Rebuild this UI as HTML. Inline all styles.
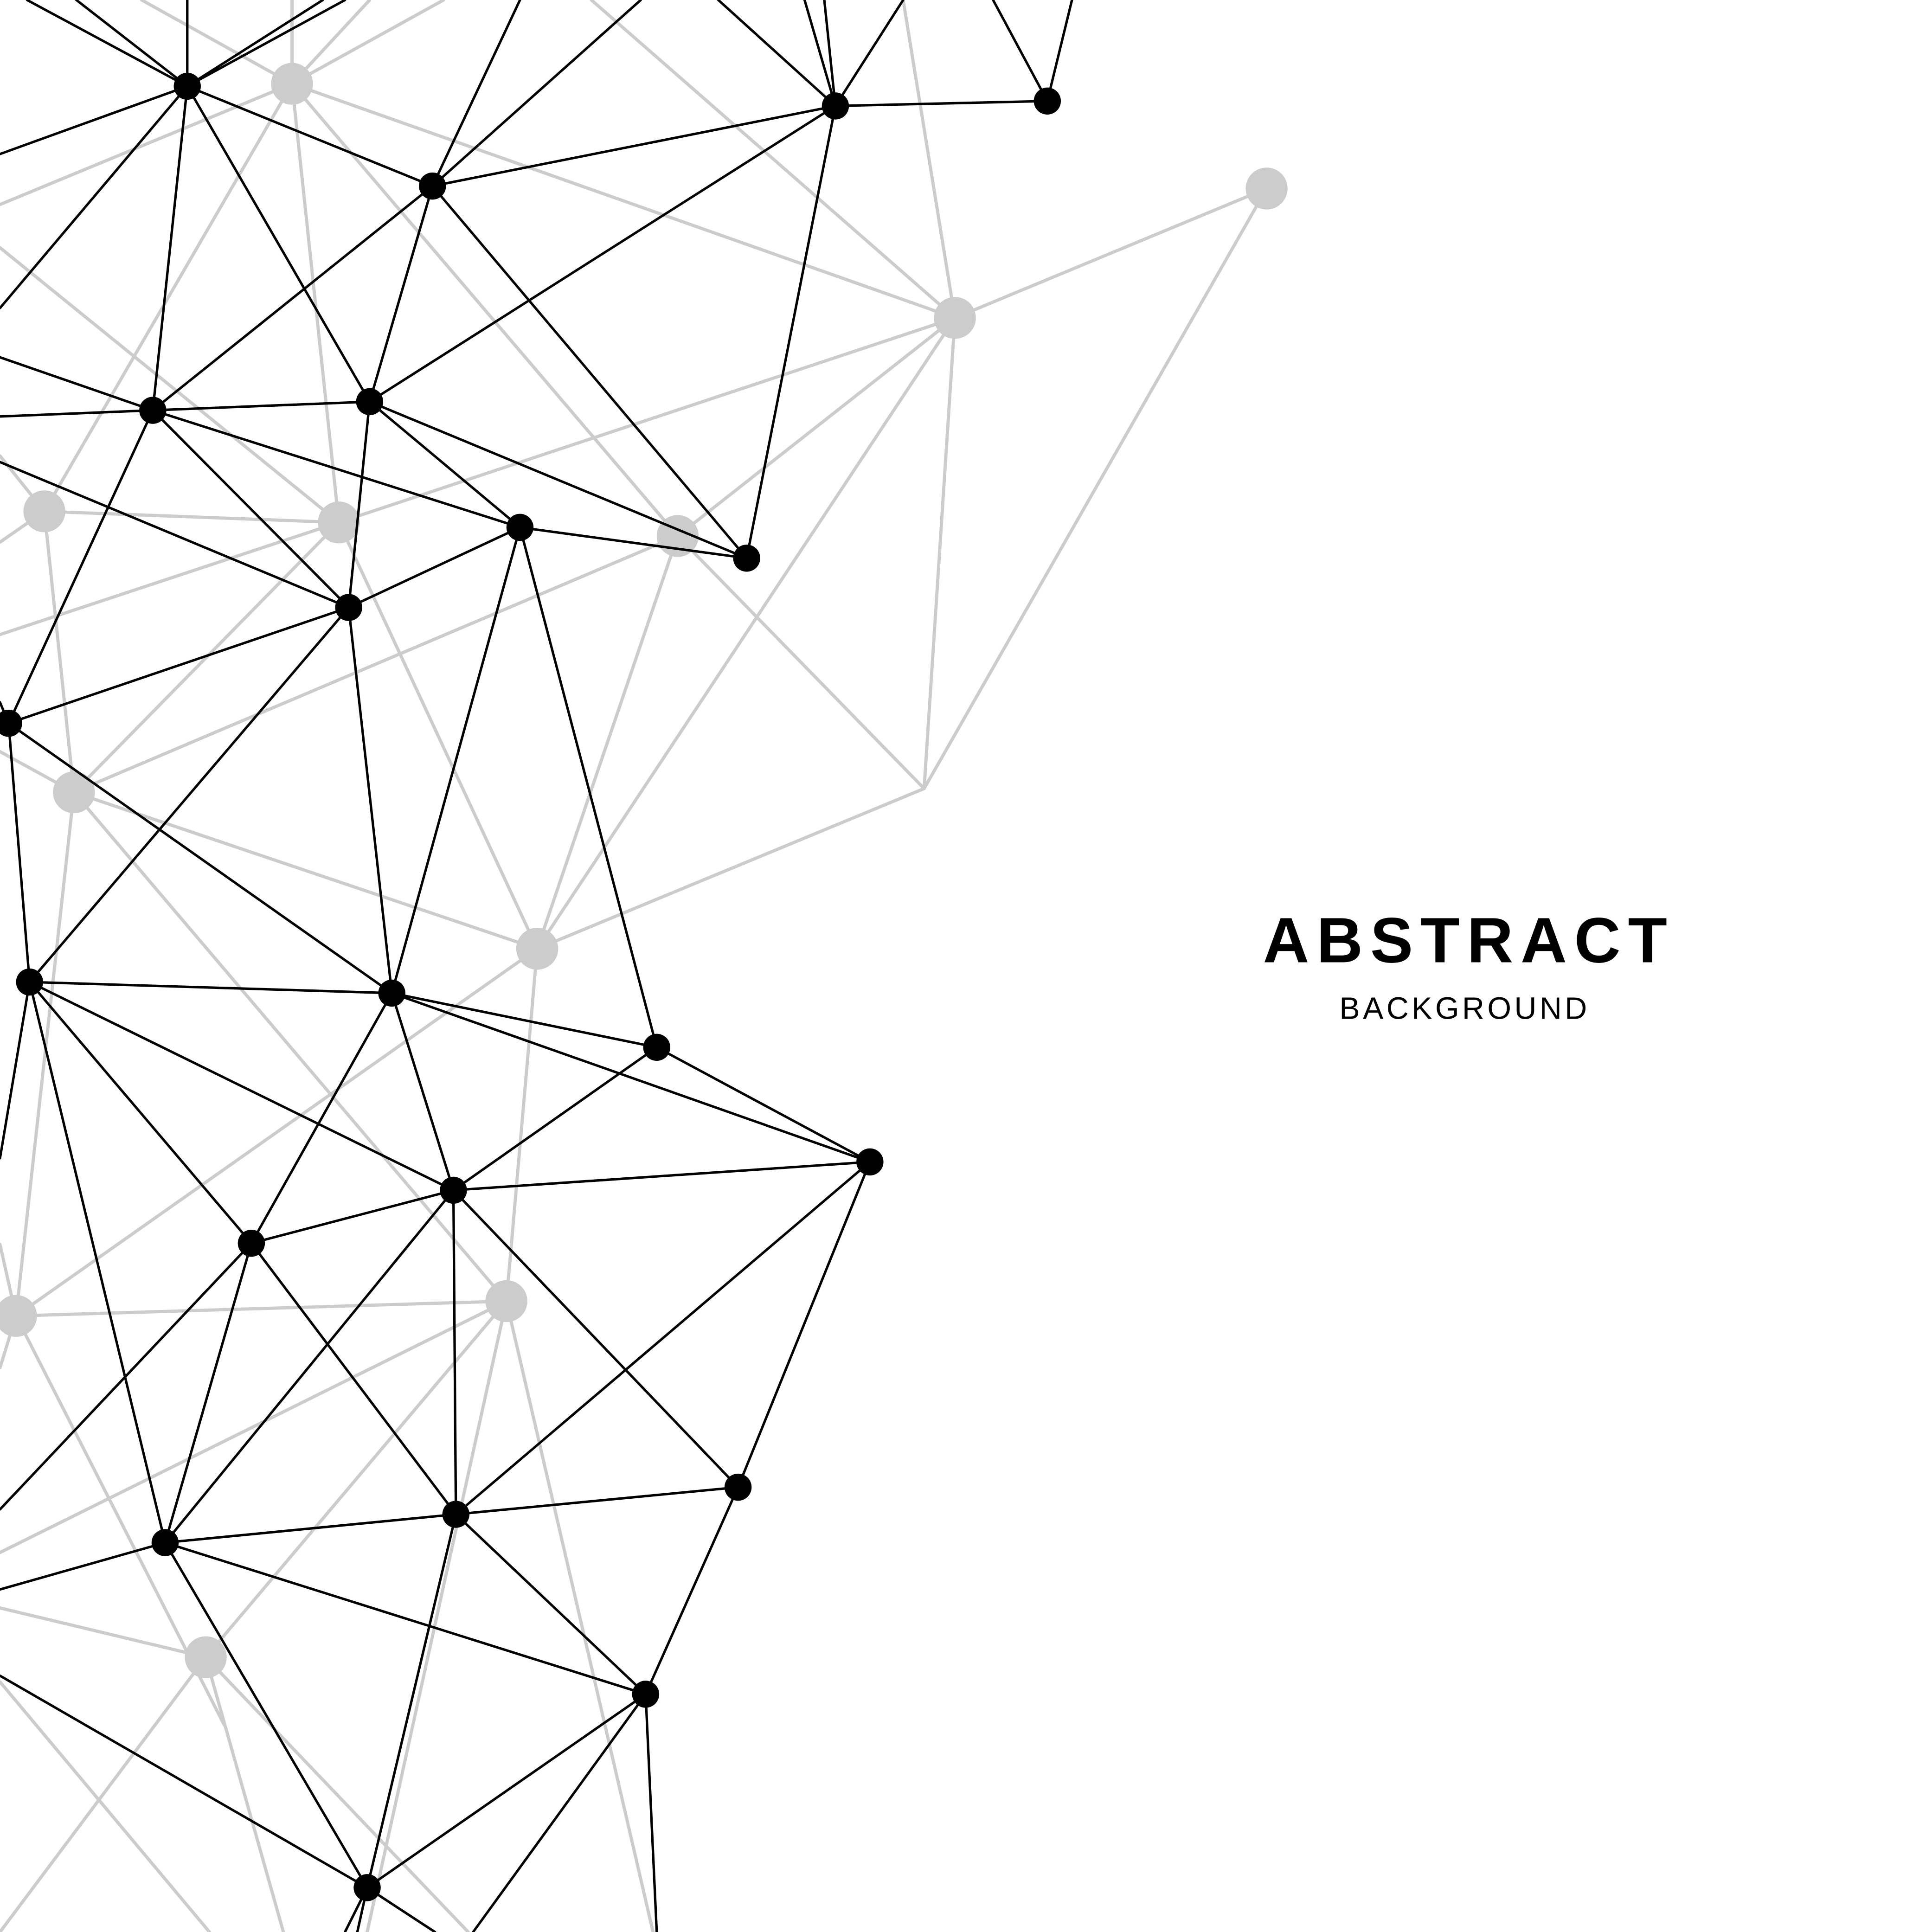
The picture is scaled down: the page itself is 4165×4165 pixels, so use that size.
<!DOCTYPE html>
<html><head><meta charset="utf-8"><style>
html,body{margin:0;padding:0;background:#fff;}
svg{display:block;}
</style></head><body>
<svg width="4165" height="4165" viewBox="0 0 1568 1568" xmlns="http://www.w3.org/2000/svg">
<rect width="1568" height="1568" fill="#fff"/>
<g stroke="#cccccc" stroke-width="2.6" fill="none" stroke-linecap="round">
<line x1="237" y1="68" x2="237" y2="0"/>
<line x1="237" y1="68" x2="115" y2="0"/>
<line x1="237" y1="68" x2="360" y2="0"/>
<line x1="237" y1="68" x2="300" y2="0"/>
<line x1="237" y1="68" x2="0" y2="166"/>
<line x1="237" y1="68" x2="775" y2="258"/>
<line x1="237" y1="68" x2="275" y2="424"/>
<line x1="237" y1="68" x2="36" y2="415"/>
<line x1="237" y1="68" x2="550" y2="435"/>
<line x1="480" y1="0" x2="775" y2="258"/>
<line x1="733" y1="0" x2="775" y2="258"/>
<line x1="1028" y1="153" x2="775" y2="258"/>
<line x1="1028" y1="153" x2="750" y2="640"/>
<line x1="775" y1="258" x2="750" y2="640"/>
<line x1="775" y1="258" x2="436" y2="770"/>
<line x1="775" y1="258" x2="275" y2="424"/>
<line x1="775" y1="258" x2="550" y2="435"/>
<line x1="550" y1="435" x2="750" y2="640"/>
<line x1="550" y1="435" x2="436" y2="770"/>
<line x1="550" y1="435" x2="60" y2="643"/>
<line x1="750" y1="640" x2="436" y2="770"/>
<line x1="0" y1="201" x2="275" y2="424"/>
<line x1="36" y1="415" x2="275" y2="424"/>
<line x1="36" y1="415" x2="0" y2="440"/>
<line x1="36" y1="415" x2="60" y2="643"/>
<line x1="0" y1="370" x2="36" y2="415"/>
<line x1="275" y1="424" x2="0" y2="515"/>
<line x1="275" y1="424" x2="60" y2="643"/>
<line x1="275" y1="424" x2="436" y2="770"/>
<line x1="60" y1="643" x2="436" y2="770"/>
<line x1="60" y1="643" x2="0" y2="610"/>
<line x1="60" y1="643" x2="411" y2="1056"/>
<line x1="60" y1="643" x2="13" y2="1068"/>
<line x1="436" y1="770" x2="411" y2="1056"/>
<line x1="436" y1="770" x2="13" y2="1068"/>
<line x1="13" y1="1068" x2="411" y2="1056"/>
<line x1="13" y1="1068" x2="0" y2="1010"/>
<line x1="13" y1="1068" x2="0" y2="1110"/>
<line x1="13" y1="1068" x2="182" y2="1400"/>
<line x1="411" y1="1056" x2="0" y2="1260"/>
<line x1="411" y1="1056" x2="167" y2="1345"/>
<line x1="411" y1="1056" x2="530" y2="1568"/>
<line x1="411" y1="1056" x2="298" y2="1568"/>
<line x1="167" y1="1345" x2="0" y2="1305"/>
<line x1="167" y1="1345" x2="0" y2="1568"/>
<line x1="167" y1="1345" x2="230" y2="1568"/>
<line x1="167" y1="1345" x2="380" y2="1568"/>
<line x1="0" y1="1365" x2="170" y2="1568"/>
</g>
<g fill="#cccccc">
<circle cx="237" cy="68" r="17"/><circle cx="775" cy="258" r="17"/><circle cx="1028" cy="153" r="17"/>
<circle cx="36" cy="415" r="17"/><circle cx="275" cy="424" r="17"/><circle cx="550" cy="435" r="17"/>
<circle cx="60" cy="643" r="17"/><circle cx="436" cy="770" r="17"/><circle cx="13" cy="1068" r="17"/>
<circle cx="411" cy="1056" r="17"/><circle cx="167" cy="1345" r="17"/>
</g>
<g stroke="#000" stroke-width="2" fill="none" stroke-linecap="round">
<line x1="152" y1="70" x2="152" y2="0"/>
<line x1="152" y1="70" x2="22" y2="0"/>
<line x1="152" y1="70" x2="62" y2="0"/>
<line x1="152" y1="70" x2="262" y2="0"/>
<line x1="152" y1="70" x2="280" y2="0"/>
<line x1="152" y1="70" x2="0" y2="125"/>
<line x1="152" y1="70" x2="0" y2="250"/>
<line x1="152" y1="70" x2="351" y2="151"/>
<line x1="152" y1="70" x2="124" y2="333"/>
<line x1="152" y1="70" x2="300" y2="326"/>
<line x1="351" y1="151" x2="422" y2="0"/>
<line x1="351" y1="151" x2="520" y2="0"/>
<line x1="351" y1="151" x2="678" y2="86"/>
<line x1="351" y1="151" x2="124" y2="333"/>
<line x1="351" y1="151" x2="300" y2="326"/>
<line x1="351" y1="151" x2="606" y2="453"/>
<line x1="678" y1="86" x2="583" y2="0"/>
<line x1="678" y1="86" x2="653" y2="0"/>
<line x1="678" y1="86" x2="669" y2="0"/>
<line x1="678" y1="86" x2="733" y2="0"/>
<line x1="678" y1="86" x2="850" y2="82"/>
<line x1="678" y1="86" x2="300" y2="326"/>
<line x1="678" y1="86" x2="606" y2="453"/>
<line x1="850" y1="82" x2="806" y2="0"/>
<line x1="850" y1="82" x2="870" y2="0"/>
<line x1="124" y1="333" x2="0" y2="290"/>
<line x1="124" y1="333" x2="0" y2="338"/>
<line x1="124" y1="333" x2="300" y2="326"/>
<line x1="124" y1="333" x2="422" y2="428"/>
<line x1="124" y1="333" x2="283" y2="493"/>
<line x1="124" y1="333" x2="7" y2="587"/>
<line x1="0" y1="375" x2="283" y2="493"/>
<line x1="300" y1="326" x2="422" y2="428"/>
<line x1="300" y1="326" x2="606" y2="453"/>
<line x1="300" y1="326" x2="283" y2="493"/>
<line x1="422" y1="428" x2="606" y2="453"/>
<line x1="422" y1="428" x2="283" y2="493"/>
<line x1="422" y1="428" x2="318" y2="806"/>
<line x1="422" y1="428" x2="533" y2="850"/>
<line x1="283" y1="493" x2="7" y2="587"/>
<line x1="283" y1="493" x2="24" y2="797"/>
<line x1="283" y1="493" x2="318" y2="806"/>
<line x1="7" y1="587" x2="0" y2="570"/>
<line x1="7" y1="587" x2="24" y2="797"/>
<line x1="7" y1="587" x2="318" y2="806"/>
<line x1="24" y1="797" x2="318" y2="806"/>
<line x1="24" y1="797" x2="368" y2="966"/>
<line x1="24" y1="797" x2="204" y2="1009"/>
<line x1="24" y1="797" x2="134" y2="1252"/>
<line x1="24" y1="797" x2="0" y2="940"/>
<line x1="318" y1="806" x2="533" y2="850"/>
<line x1="318" y1="806" x2="706" y2="943"/>
<line x1="318" y1="806" x2="368" y2="966"/>
<line x1="318" y1="806" x2="204" y2="1009"/>
<line x1="533" y1="850" x2="706" y2="943"/>
<line x1="533" y1="850" x2="368" y2="966"/>
<line x1="706" y1="943" x2="368" y2="966"/>
<line x1="706" y1="943" x2="370" y2="1229"/>
<line x1="706" y1="943" x2="599" y2="1207"/>
<line x1="368" y1="966" x2="204" y2="1009"/>
<line x1="368" y1="966" x2="370" y2="1229"/>
<line x1="368" y1="966" x2="599" y2="1207"/>
<line x1="368" y1="966" x2="134" y2="1252"/>
<line x1="204" y1="1009" x2="370" y2="1229"/>
<line x1="204" y1="1009" x2="134" y2="1252"/>
<line x1="204" y1="1009" x2="0" y2="1225"/>
<line x1="599" y1="1207" x2="370" y2="1229"/>
<line x1="599" y1="1207" x2="524" y2="1375"/>
<line x1="370" y1="1229" x2="134" y2="1252"/>
<line x1="370" y1="1229" x2="524" y2="1375"/>
<line x1="370" y1="1229" x2="298" y2="1532"/>
<line x1="134" y1="1252" x2="524" y2="1375"/>
<line x1="134" y1="1252" x2="298" y2="1532"/>
<line x1="134" y1="1252" x2="0" y2="1290"/>
<line x1="524" y1="1375" x2="298" y2="1532"/>
<line x1="524" y1="1375" x2="384" y2="1568"/>
<line x1="524" y1="1375" x2="533" y2="1568"/>
<line x1="0" y1="1360" x2="298" y2="1532"/>
<line x1="298" y1="1532" x2="280" y2="1568"/>
<line x1="298" y1="1532" x2="290" y2="1568"/>
<line x1="298" y1="1532" x2="353" y2="1568"/>
</g>
<g fill="#000">
<circle cx="152" cy="70" r="11"/><circle cx="678" cy="86" r="11"/><circle cx="850" cy="82" r="11"/>
<circle cx="351" cy="151" r="11"/><circle cx="124" cy="333" r="11"/><circle cx="300" cy="326" r="11"/>
<circle cx="422" cy="428" r="11"/><circle cx="606" cy="453" r="11"/><circle cx="283" cy="493" r="11"/>
<circle cx="7" cy="587" r="11"/><circle cx="24" cy="797" r="11"/><circle cx="318" cy="806" r="11"/>
<circle cx="533" cy="850" r="11"/><circle cx="706" cy="943" r="11"/><circle cx="368" cy="966" r="11"/>
<circle cx="204" cy="1009" r="11"/><circle cx="599" cy="1207" r="11"/><circle cx="370" cy="1229" r="11"/>
<circle cx="134" cy="1252" r="11"/><circle cx="524" cy="1375" r="11"/><circle cx="298" cy="1532" r="11"/>
</g>
<text x="1025" y="781" font-family="Liberation Sans, sans-serif" font-weight="bold" font-size="52" textLength="328" lengthAdjust="spacing" fill="#000">ABSTRACT</text>
<text x="1087" y="827" font-family="Liberation Sans, sans-serif" font-size="25" textLength="201" lengthAdjust="spacing" fill="#000">BACKGROUND</text>
</svg>
</body></html>
